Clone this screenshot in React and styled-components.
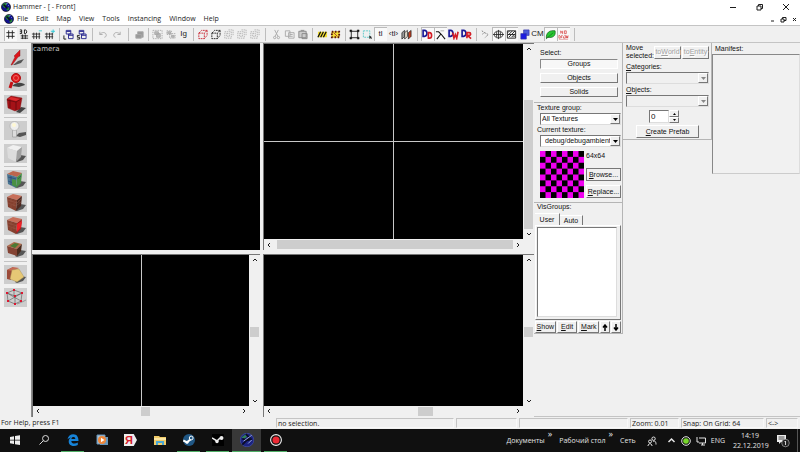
import React from 'react';
import styled, { createGlobalStyle } from 'styled-components';

const face = '#f0f0f0';
const shade = '#8c8c8c';
const line = '#c4c4c4';
const ui = `'Open Sans', 'Noto Sans', sans-serif`;
const dialog = `'Liberation Sans', Arial, sans-serif`;

const GlobalStyle = createGlobalStyle`
  * {box-sizing: border-box;}
  body {margin: 0; background: ${face}; color: #1c1c1c; font: 7px/10px ${ui};}
  button, input, select {font: inherit; color: inherit; margin: 0; padding: 0; border: 0; background: none; border-radius: 0;}
  svg {display: block; flex: none;}
  u {text-underline-offset: 1px; text-decoration-thickness: 1px;}
`;
const Page = styled.div`
  display: flex;
  flex-direction: column;
  min-height: 100vh;
`;

/* title + menu */
const TitleBar = styled.header`
  display: flex;
  align-items: center;
  height: 13px;
  padding: 1px 10px 0 1px;
  gap: 2px;
  background: white;
`;
const Title = styled.h1`
  flex: 1;
  margin: 0;
  font-size: 7px;
  font-weight: normal;
`;
const WindowButtons = styled.div`
  display: flex;
  gap: ${p=>p.$gap}px;
`;
const MenuBar = styled.nav`
  display: flex;
  align-items: center;
  height: 12px;
  padding: 0 2px 0 4px;
  background: white;
  ul {display: flex; flex: 1; list-style: none; margin: 0; padding: 0 0 0 3px; gap: 8px;}
`;
const MenuButton = styled.button`
  line-height: 12px;
`;

/* toolbar */
const Toolbar = styled.div`
  display: flex;
  align-items: center;
  height: 18px;
  padding-left: 4px;
  border-top: 1px solid ${line};
  border-bottom: 1px solid ${line};
`;
const ToolButton = styled.button`
  display: flex;
  align-items: center;
  justify-content: center;
  width: 13px;
  height: 14px;
  font: 8px/10px ${dialog};
  color: ${p=>p.$off ? '#aaa' : '#222'};
  ${p=>p.$on && 'background: #f9f9f9; box-shadow: inset 1px 1px #bbb;'}
`;
const Divider = styled.span`
  display: flex;
  justify-content: center;
  width: ${p=>p.$w}px;
  &::before {content: ''; width: 1px; height: 13px; background: #bdbdbd;}
`;

/* work area */
const Work = styled.main`
  display: flex;
  flex: 1;
`;
const ToolColumn = styled.aside`
  width: 32px;
  padding: 3px 4px 0;
  border-right: 1px solid ${shade};
`;
const ToolSet = styled.div`
  display: flex;
  flex-direction: column;
  gap: 4px;
  padding: 3px 0;
  border-bottom: 1px solid ${line};
  &:last-child {border: 0;}
`;
const BigTool = styled.button`
  width: 23px;
  height: 19px;
  background: #cdcdcd;
`;
const Views = styled.section`
  flex: 1;
  display: grid;
  grid-template-columns: 228fr 271fr;
  grid-template-rows: 208fr 163fr;
  gap: 4px 3px;
`;
const View = styled.div`
  display: grid;
  grid-template-columns: 1fr ${p=>p.$bars ? '11px' : '0'};
  grid-template-rows: 1fr ${p=>p.$bars ? '11px' : '0'};
  border-left: 1px solid #777;
  border-top: 1px solid #777;
  min-width: 0;
`;
const Canvas = styled.div`
  display: flex;
  grid-area: 1 / 1;
  background: black;
  color: #c4c4c4;
  font: 7px/11px 'DejaVu Sans', sans-serif;
  min-height: 0;
  svg {flex: 1; min-width: 0;}
`;
const Bar = styled.div`
  display: flex;
  flex-direction: ${p=>p.$row ? 'row' : 'column'};
  align-items: stretch;
  grid-area: ${p=>p.$row ? '2 / 1' : '1 / 2'};
`;
const BarButton = styled.button`
  display: flex;
  align-items: center;
  justify-content: center;
  flex: 0 0 10px;
  min-width: 0;
`;
const Thumb = styled.div`
  flex: ${p=>p.$size} 0 0;
  background: #cdcdcd;
  margin: ${p=>p.$row ? '1px 0' : '0 1px'};
`;
const Space = styled.div`
  flex: ${p=>p.$size} 0 0;
`;

/* side panels */
const Side = styled.aside`
  display: grid;
  grid-template-columns: 89px 89px 88px;
  align-items: start;
  width: 266px;
  border-bottom: 1px solid ${line};
  font: 7px/8px ${dialog};
  color: #111;
`;
const Panel = styled.div`
  border-right: 1px solid #b5b5b5;
`;
const Section = styled.section`
  display: flex;
  flex-direction: column;
  padding: ${p=>p.$pad};
  border-bottom: 1px solid #b5b5b5;
`;
const Caption = styled.label`
  display: block;
  margin: ${p=>p.$m || '0'};
`;
const Push = styled.button`
  display: flex;
  align-items: center;
  justify-content: center;
  height: ${p=>p.$h || 10}px;
  width: ${p=>p.$w ? `${p.$w}px` : 'auto'};
  border: 1px solid;
  border-color: ${p=>p.$down ? '#888 #fff #fff #888' : '#fff #777 #777 #fff'};
  background: ${p=>p.$down ? '#f7f7f7' : face};
  outline: ${p=>p.$default ? '1px solid #777' : 'none'};
  outline-offset: -1px;
  &:disabled {color: #a0a0a0; text-shadow: 1px 1px white;}
`;
const ButtonStack = styled.div`
  display: grid;
  gap: ${p=>p.$gap}px;
`;
const Combo = styled.span`
  display: flex;
  position: relative;
  height: 12px;
  border: 1px solid;
  border-color: #777 #ddd #ddd #777;
  background: ${p=>p.$off ? face : 'white'};
  select {flex: 1; min-width: 0; appearance: none; padding-left: ${p=>p.$indent || 1}px; padding-right: 9px; opacity: 1;}
`;
const ComboArrow = styled.span`
  position: absolute;
  right: 0;
  top: 0;
  bottom: 0;
  display: flex;
  align-items: center;
  justify-content: center;
  width: 10px;
  pointer-events: none;
  background: ${face};
  border: 1px solid;
  border-color: #fff #777 #777 #fff;
`;
const TextureRow = styled.div`
  display: flex;
  gap: 2px;
  margin-top: 4px;
`;
const TextureButtons = styled.div`
  display: grid;
  flex: 1;
  grid-template-rows: 13px 13px 13px;
  row-gap: 4px;
  span {padding-top: 1px;}
`;
const Tabs = styled.div`
  display: flex;
  align-items: flex-end;
`;
const Tab = styled.button`
  height: ${p=>p.$on ? 12 : 10}px;
  width: ${p=>p.$on ? 25 : 23}px;
  border-top: 1px solid white;
  border-right: 1px solid #777;
`;
const TabPage = styled.div`
  padding: 1px 3px 2px 1px;
  border: 1px solid;
  border-color: #fff #777 #777 #fff;
`;
const List = styled.div`
  height: 90px;
  background: white;
  border: 1px solid;
  border-color: #777 #ddd #ddd #777;
`;
const ButtonRow = styled.div`
  display: flex;
  justify-content: ${p=>p.$center ? 'center' : 'flex-start'};
  gap: 1px;
  padding-top: 1px;
`;
const MoveRow = styled.div`
  display: flex;
  align-items: center;
  gap: 1px;
`;
const MoveLabel = styled.span`
  width: 27px;
`;
const Spinner = styled.div`
  display: flex;
  width: 30px;
  margin: 3px 0 1px 23px;
  input {
    width: 20px;
    height: 13px;
    padding-left: 1px;
    font-size: 8px;
    background: white;
    border: 1px solid;
    border-color: #777 #ddd #ddd #777;
  }
`;
const ManifestTitle = styled.h2`
  margin: 0;
  padding: 2px 0 1px 3px;
  font: inherit;
`;
const ManifestBox = styled.div`
  height: 120px;
  border: 1px solid;
  border-color: #888 #ddd #ccc #888;
  background: #f1f1f1;
`;

/* status */
const Status = styled.footer`
  display: grid;
  grid-template-columns: 276fr 180fr 63fr 111fr 51fr 85fr 34fr;
  height: 12px;
  padding-top: 1px;
`;
const Cell = styled.span`
  height: 10px;
  padding-left: 1px;
  white-space: nowrap;
  overflow: hidden;
  ${p=>p.$inset && 'border: 1px solid; border-color: #c4c4c4 #f8f8f8 #f8f8f8 #c4c4c4; line-height: 9px; margin-right: 2px;'}
`;

/* task bar */
const TaskBar = styled.footer`
  display: flex;
  height: 23px;
  background: #101010;
  color: #e4e4e4;
  font: 7px/10px ${ui};
`;
const Task = styled.button`
  display: flex;
  align-items: center;
  justify-content: center;
  width: 29px;
  background: ${p=>p.$active ? '#383838' : 'none'};
  box-shadow: ${p=>p.$active ? 'inset 0 -1px #4fae66' : 'none'};
`;
const Running = styled.span`
  display: flex;
  align-items: center;
  justify-content: center;
  width: 23px;
  height: 23px;
  border-bottom: 1px solid ${p=>p.$run ? '#4fae66' : 'transparent'};
`;
const YandexTile = styled.span`
  width: 13px;
  height: 12px;
  background: #eee;
  clip-path: polygon(0 0, 75% 0, 100% 50%, 75% 100%, 0 100%);
  color: #d5202b;
  font: bold 11px/12px ${dialog};
  text-align: left;
  padding-left: 1px;
`;
const Links = styled.div`
  display: flex;
  align-items: center;
  gap: 7px;
  margin-left: auto;
  a {color: inherit; text-decoration: none;}
  span {align-self: flex-start; font-size: 9px; margin-left: -4px;}
`;
const Tray = styled.div`
  display: flex;
  align-items: center;
  gap: 5px;
  padding-left: 11px;
`;
const Clock = styled.time`
  width: 34px;
  margin: 0 4px 0 3px;
  text-align: center;
`;
const Desktop = styled.span`
  height: 23px;
  width: 3px;
  margin-left: 2px;
  border-left: 1px solid #555;
`;

function Icon({ w = 12, h = 12, box, children }){
  return(
    <svg width={w} height={h} viewBox={box || `0 0 ${w} ${h}`} fill="none" stroke="currentColor" aria-hidden="true">
      {children}
    </svg>
  );
}
const Globe = ({ size = 10 }) => (
  <Icon w={size} h={size} box="0 0 10 10">
    <circle cx="5" cy="5" r="4.6" fill="#10108c" stroke="#111" strokeWidth=".6"/>
    <path d="M1.2 2.8 3 1.2 5.5 1l.6 1.6-1.7.7.5 1.8L3.4 6 2 4.3ZM6.5 5.2l2 .6-.8 2.1-1.8.9-.4-2Z" fill="#248a38" stroke="none"/>
    <path d="m2.5 2.5 4 4" stroke="#06151a" strokeWidth="1.6"/>
    <path d="m5 2 2-1M7 3l1 1" stroke="#8295ee" strokeWidth=".7"/>
  </Icon>
);
const hash = <path d="M4 1.5v9M8 1.5v9M1.5 4h9M1.5 8h9"/>;
const smallHash = <path d="M3 4v7M6 4v7M9 4v7M1 5.5h9M1 8.5h9" strokeWidth=".9"/>;
const windows = <path d="M3.5 1.5h5v4h-5zM3.5 2.7h5M6 5.5h5v5H6zM6 6.9h5" stroke="#25258e"/>;
const cube = <path d="M2 4.5h6v6H2zM2 4.5l3-3h6l-3 3M11 1.5V7l-3 3.5" strokeDasharray="2 .8"/>;
const bulk = <path d="M2 3h7v7H2zM4 5h3v3H4zM6 1h5v6" strokeDasharray="1.5 .8" strokeWidth=".9"/>;
const word = (a, b) => (
  <g strokeWidth="1.8">
    <path d="M1.2 1.5v6.500h1.600c3.500 0 3.500-6.500 0-6.500Z" stroke="#171795"/>
    <path d={b} stroke={a}/>
  </g>
);
const sheet = (x, fill) => <path d={`M${x} 4 ${x+3} 1.5V8l-3 3Z`} fill={fill}/>;

const tools = [
  { name: 'Grid', on: true, art: hash },
  { name: '3D grid', art: <><path d="M2 1h2v4H2M2 3h2M7 1v4h1c2 0 2-4 0-4Z" stroke="#111"/><path d="M3 7.5h8M3 10h8M5 6v5M8 6v5"/></> },
  { name: 'Smaller grid', art: <>{smallHash}<path d="M8.500 2H12" stroke="#4bc6cf"/></> },
  { name: 'Larger grid', art: <>{smallHash}<path d="M7.500 2.500H12M10 .5v4" stroke="#29c8d5"/></> },
  { sep: 6 },
  { name: 'Load window state', art: <>{windows}<path d="M1 7v4h2.500" stroke="#111"/></> },
  { name: 'Save window state', art: <>{windows}<path d="M4 7H1.500v2H4v2H1" stroke="#111"/></> },
  { sep: 9 },
  { name: 'Undo', off: true, art: <path d="M2 3v3h3M2 6c2-3 7-3 7 1 0 1-1 2-2 2"/> },
  { name: 'Redo', off: true, art: <path d="M10 3v3H7M10 6C8 3 3 3 3 7c0 1 1 2 2 2"/> },
  { sep: 10 },
  { name: 'Carve', off: true, art: <path d="M2 6h6v4H2zM4 6V3h6v6H8" fill="#999"/> },
  { sep: 5 },
  { name: 'Group', off: true, art: <><path d="M1 1.500h10v9H1z" strokeDasharray="1.500 1"/><path d="M3 3h4v3H3zM5 5h4v4H5z" fill="#bbb"/></> },
  { name: 'Ungroup', off: true, art: <><path d="M2 2h5v4H2zM5 5h6v5H5z" strokeDasharray="1.500 1"/><path d="M3 3h3v2H3zM7 7h3v2H7z" fill="#bbb"/></> },
  { name: 'Ignore groups', text: 'Ig' },
  { sep: 6 },
  { name: 'Hide selected', art: <g stroke="#c92a35">{cube}</g> },
  { name: 'Hide unselected', art: cube },
  { name: 'Show hidden', off: true, art: bulk },
  { name: 'Hide object', off: true, art: bulk },
  { name: 'Show object', off: true, art: bulk },
  { sep: 9 },
  { name: 'Cut', off: true, art: <path d="m4 1 3.500 7M8 1 4.500 8M4 8a1.300 1.300 0 1 0 .1 2.600A1.300 1.300 0 0 0 4 8ZM8 8a1.300 1.300 0 1 0 .1 2.600A1.300 1.300 0 0 0 8 8Z"/> },
  { name: 'Copy', off: true, art: <path d="M1.500 2h5v6h-5zM5 4h6v6H5zM6.500 6h3M6.500 8h3"/> },
  { name: 'Paste', off: true, art: <path d="M2 2.500h8v7H2zM4 1.500h4M5.500 5h5.500v5.500H5.500z" fill="#ccc" stroke="#888"/> },
  { sep: 7 },
  { name: 'Cordon', art: <><path d="M1 3h10v6H1z" fill="#f3df32" stroke="none"/><path d="m1 9 3-6M4 9l3-6M7 9l3-6" stroke="#111" strokeWidth="1.400"/></> },
  { name: 'Edit cordon', art: <><path d="M2 3h8v6H2z" fill="#f3df32" stroke="#c9a020"/><path d="M2 3h8v6H2z" stroke="#511" strokeWidth="2" strokeDasharray="1.500 2"/><path d="m4 4 4 4" stroke="#a33"/></> },
  { sep: 6 },
  { name: 'Select by handles', art: <><path d="M2.500 2.500h7v7h-7z"/><path d="M1 1h2v2H1zM9 1h2v2H9zM1 9h2v2H1zM9 9h2v2H9z" fill="#111" stroke="#111" strokeWidth=".5"/></> },
  { name: 'Auto selection', art: <><path d="M1.500 2h7v7h-7z" stroke="#57c8c8" strokeDasharray="2 1"/><path d="M8 7v4l1-1 2 1-1-2h1Z" fill="#222" stroke="none"/></> },
  { name: 'Texture lock', on: true, text: 'tl' },
  { name: 'Scaling texture lock', text: '‹tl›' },
  { name: 'Face alignment', art: <g strokeWidth=".8">{sheet(1, '#999')}{sheet(4, '#e5dfd0')}{sheet(8, '#c63e20')}</g> },
  { sep: 8 },
  { name: 'Displacement mask', on: true, art: word('#d31d25', 'M7 4v6h1.200c3 0 3-6 0-6Z') },
  { name: 'Walkable', on: true, art: <><path d="M1 3h3l3 3 4 5M6 6l-4 5" stroke="#111" strokeWidth="1.200"/><path d="M6 2h4" stroke="#aaa"/></> },
  { name: 'Displacement walkable', art: word('#d31d25', 'm5 4 1.500 6L8 6l1.500 4L11 3') },
  { name: 'Displacement alpha', art: word('#d31d25', 'M6.500 10V4H9c2 0 2 3 0 3H7l4 3.500') },
  { sep: 6 },
  { name: 'Helpers', art: <path d="M2 2 5 4 2 6M5 4l4 2-4 4" stroke="#777" strokeDasharray="1.500 1"/> },
  { name: 'Sphere', on: true, art: <path d="M6 2.200C3 2.200 1.300 4 1.300 6S3 9.800 6 9.800 10.700 8 10.700 6 9 2.200 6 2.200ZM0 6h12M6 1v10M4 3v6M8 3v6" strokeWidth=".9"/> },
  { name: 'Models', on: true, art: <><path d="M1.500 2h9v8h-9z"/><path d="m2 4 2-2M2 7l5-5M3 9l7-7M6 9l4-4M8 9l2-2M2 6h8"/></> },
  { name: 'Instances', art: <><path d="M5 1h6v6H5z" fill="#4a5bd8" stroke="#3434a8" strokeWidth=".7"/><path d="M2 5h6v6H2z" fill="#1c1ce0" stroke="#3434a8" strokeWidth=".7"/></> },
  { name: 'Collision model', text: 'CM' },
  { name: 'Detail props', on: true, art: <><path d="M1.500 10C1 4 5 1 11 2c1 6-3 8-8 7Z" fill="#27c832" stroke="#126017" strokeWidth=".8"/><path d="m1 11 8-7" stroke="#126017" strokeWidth=".7"/></> },
  { name: 'No draw', on: true, art: <g stroke="#d84343" strokeWidth=".8"><path d="M3 5V2l2 3V2M7 2h2v3H7ZM1 7v3h1c2 0 1-3-1-3M4 10V7h1M7 7h1v3H6V8M9 7l.5 3 .5-2 .5 2 .5-3"/><path d="M1 11.500h10" stroke="#e1a1a1"/></g> },
];

const Shadow = () => <path d="m11 17 5-6 6 1-3 4-6 2Z" fill="#555" stroke="none"/>;
const Block = ({ top, left, right }) => (
  <>
    <Shadow/>
    <g stroke="none">
      <path d="m3 4 6-3 9 2-5 4Z" fill={top}/>
      <path d="m3 4 10 3-1 11-8-4Z" fill={left}/>
      <path d="m13 7 5-4-1 10-5 5Z" fill={right}/>
    </g>
  </>
);
const bricks = <path d="m4 7 9 3 4-4M4 10l8 3 5-4M7 6v3M10 10v3M7 12v3M15 7v3" stroke="#a0604f" strokeWidth=".4"/>;
const bigTools = [
  [
    { name: 'Selection', art: <><path d="m9 16 5-4 6-2-3 4-6 2Z" fill="#555" stroke="none"/><path d="m7 16 4-8-1-1 6-6v6l-2 1-6 8Z" fill="#dc151b" stroke="#801015" strokeWidth=".4"/></> },
    { name: 'Magnify', art: <><path d="M8 14c5-5 12-3 13-1l-6 2Z" fill="#444" stroke="none"/><circle cx="12" cy="6" r="4.500" fill="#df171b" stroke="#b01014"/><circle cx="12" cy="6" r="2.500" stroke="#ef6761"/><path d="m8 10-2 6" stroke="#c50f14" strokeWidth="3"/></> },
    { name: 'Camera', art: <><path d="m12 17 5-5 5 1-6 5Z" fill="#444" stroke="none"/><path d="m3 4 4-3 11 2-2 11-5 2-7-3Z" fill="#a51217" stroke="#7c080b" strokeWidth=".4"/><path d="m3 5 9 2 5-3M12 7v8M6 3v10" stroke="#5c080b" strokeWidth=".7"/><path d="m4 4 3-2 9 2-4 2Z" fill="#dc2a2e" stroke="none"/></> },
  ],
  [
    { name: 'Entity', art: <><path d="m12 15 3-3 7-1v3l-6 2Z" fill="#555" stroke="none"/><path d="M8.500 7h4v9h-4Z" fill="#ddd" stroke="#888" strokeWidth=".5"/><circle cx="10.500" cy="5" r="4.500" fill="#eee" stroke="#999" strokeWidth=".5"/><circle cx="10" cy="4" r="2" fill="#fff8d4" stroke="none"/></> },
    { name: 'Block', art: <Block top="#f0f0f0" left="#dcdcdc" right="#a0a0a0"/> },
  ],
  [
    { name: 'Texture application', art: <><Block top="#bd664d" left="#4a7692" right="#499044"/><path d="m4 7 8 2M7 6v9M4 11l8 3M14 9l3-3" stroke="#263d72" strokeWidth=".6"/><path d="m8 9 4 1v7l-4-2Z" fill="#499044" stroke="none"/></> },
    { name: 'Apply texture', art: <><Block top="#c76f5a" left="#85402f" right="#502920"/>{bricks}</> },
    { name: 'Decals', art: <><Block top="#c76f5a" left="#85402f" right="#a02420"/>{bricks}<path d="m13 8 5-3-1 6-4 5Z" fill="#ef2028" stroke="none"/></> },
    { name: 'Overlay', art: <g stroke="none"><Shadow/><path d="m3 7 7-4 8 2-5 5Z" fill="#b06a48"/><path d="m6 7 5-3 4 1-4 4Z" fill="#4c7a34"/><path d="m3 7 10 3v7l-9-3Z" fill="#844333"/><path d="m13 10 5-5-1 7-4 5Z" fill="#4b2b1d"/></g> },
  ],
  [
    { name: 'Clipping', art: <><Shadow/><path d="M3 14V5l6-3-2 13Z" fill="#9b4a38" stroke="none"/><path d="m3 5 6-3 6 1-6 3Z" fill="#c36b56" stroke="none"/><path d="m8 5 7-1 5 8-7 5-7-3Z" fill="#e6c875" stroke="#a08850" strokeWidth=".4"/></> },
    { name: 'Vertex', art: <><path d="m13 16 5-2 4-2" stroke="#999"/><path d="m3 5 7-3 8 3-7 3ZM3 5l1 8 7 3 6-3 1-8M11 8v8M3 5l14 8M18 5 4 13M10 2v6" stroke="#555" strokeWidth=".6"/><path d="M2 4h2v2H2zM9 1h2v2H9zM17 4h2v2h-2zM10 7h2v2h-2zM3 12h2v2H3zM10 15h2v2h-2zM16 12h2v2h-2z" fill="#dc1630" stroke="none"/></> },
  ],
];

const arrows = {
  up: 'm1 4 2-2 2 2', down: 'm1 2 2 2 2-2', left: 'M4 1 2 3l2 2', right: 'm2 1 2 2-2 2',
};
const Chevron = ({ to, size = 6 }) => <Icon w={size} h={size} box="0 0 6 6"><path d={arrows[to]}/></Icon>;
const Drop = ({ off }) => <Icon w={5} h={3}><path d="M0 0h5L2.500 3Z" fill={off ? '#888' : '#000'} stroke="none"/></Icon>;

function ScrollBar({ row, sizes }){
  return(
    <Bar $row={row}>
      <BarButton aria-label={row ? 'Scroll left' : 'Scroll up'}><Chevron to={row ? 'left' : 'up'}/></BarButton>
      <Space $size={sizes[0]}/>
      <Thumb $row={row} $size={sizes[1]}/>
      <Space $size={sizes[2]}/>
      <BarButton aria-label={row ? 'Scroll right' : 'Scroll down'}><Chevron to={row ? 'right' : 'down'}/></BarButton>
    </Bar>
  );
}

function Viewport({ vertical, horizontal, v, h }){
  return(
    <View $bars>
      <Canvas>
        <svg width="100%" height="100%" stroke="#c8c8c8" shapeRendering="crispEdges">
          {vertical && <line x1="50%" x2="50%" y1="0" y2="100%"/>}
          {horizontal && <line x1="0" x2="100%" y1="50%" y2="50%"/>}
        </svg>
      </Canvas>
      <ScrollBar sizes={v}/>
      <ScrollBar row sizes={h}/>
    </View>
  );
}

function Select({ id, value, off, indent }){
  return(
    <Combo $off={off} $indent={indent}>
      <select id={id} disabled={off}>{value && <option>{value}</option>}</select>
      <ComboArrow><Drop off={off}/></ComboArrow>
    </Combo>
  );
}

function Checker(){
  return(
    <svg width="44" height="47" viewBox="0 0 8 8" preserveAspectRatio="none" role="img" aria-label="debugambientcube">
      <rect width="8" height="8" fill="#f000f0"/>
      {[...Array(64).keys()].filter(i=>(i % 8 + Math.floor(i / 8)) % 2).map(i=>(
        <rect key={i} x={i % 8} y={Math.floor(i / 8)} width="1" height="1" fill="black"/>
      ))}
    </svg>
  );
}

function SidePanels(){
  return(
    <Side>
      <Panel>
        <Section $pad="6px 4px 5px 6px">
          <Caption as="span" $m="0 0 2px">Select:</Caption>
          <ButtonStack $gap={4}>
            <Push $down>Groups</Push>
            <Push>Objects</Push>
            <Push>Solids</Push>
          </ButtonStack>
        </Section>
        <Section $pad="1px 1px 4px 6px">
          <Caption htmlFor="group" $m="0 0 1px -3px">Texture group:</Caption>
          <Select id="group" value="All Textures"/>
          <Caption htmlFor="texture" $m="1px 0 1px -3px">Current texture:</Caption>
          <Select id="texture" value="debug/debugambientcube" indent={4}/>
          <TextureRow>
            <Checker/>
            <TextureButtons>
              <span>64x64</span>
              <Push $h={13} $default><u>B</u>rowse...</Push>
              <Push $h={13}><u>R</u>eplace...</Push>
            </TextureButtons>
          </TextureRow>
        </Section>
        <Section $pad="0 1px 0 1px">
          <Caption as="span" $m="0 0 2px 2px">VisGroups:</Caption>
          <Tabs role="tablist">
            <Tab role="tab" aria-selected="true" $on>User</Tab>
            <Tab role="tab" aria-selected="false">Auto</Tab>
          </Tabs>
          <TabPage role="tabpanel"><List/></TabPage>
          <ButtonRow>
            <Push $h={12} $w={21}><u>S</u>how</Push>
            <Push $h={12} $w={21}><u>E</u>dit</Push>
            <Push $h={12} $w={21}><u>M</u>ark</Push>
            <Push $h={12} $w={10} aria-label="Move up"><Icon w={6} h={7}><path d="M3 7V2M1 3.500 3 1l2 2.500" stroke="#000" strokeWidth="1.500"/></Icon></Push>
            <Push $h={12} $w={10} aria-label="Move down"><Icon w={6} h={7}><path d="M3 0v5M1 3.500 3 6l2-2.500" stroke="#000" strokeWidth="1.500"/></Icon></Push>
          </ButtonRow>
        </Section>
      </Panel>
      <Panel>
        <Section $pad="1px 2px 1px 3px">
          <MoveRow>
            <MoveLabel>Move selected:</MoveLabel>
            <Push $h={13} $w={27} disabled>to<u>W</u>orld</Push>
            <Push $h={13} $w={27} disabled>to<u>E</u>ntity</Push>
          </MoveRow>
          <Caption htmlFor="categories" $m="3px 0 1px"><u>C</u>ategories:</Caption>
          <Select id="categories" off/>
          <Caption htmlFor="objects" $m="2px 0 1px"><u>O</u>bjects:</Caption>
          <Select id="objects" off/>
          <Spinner>
            <input aria-label="Count" defaultValue="0"/>
            <ButtonStack $gap={0}>
              <Push $h={7} $w={10} aria-label="More"><Icon w={3} h={2}><path d="M0 2h3L1.500 0Z" fill="#000" stroke="none"/></Icon></Push>
              <Push $h={6} $w={10} aria-label="Less"><Icon w={3} h={2}><path d="M0 0h3L1.500 2Z" fill="#000" stroke="none"/></Icon></Push>
            </ButtonStack>
          </Spinner>
          <ButtonRow $center>
            <Push $h={13} $w={63}><u>C</u>reate Prefab</Push>
          </ButtonRow>
        </Section>
      </Panel>
      <section>
        <ManifestTitle>Manifest:</ManifestTitle>
        <ManifestBox/>
      </section>
    </Side>
  );
}

const tasks = [
  { name: 'Start', art: <path d="m1 3 4-.7v3.500H1ZM6 2.100 11 1.300v4.500H6ZM1 6.500h4V10l-4-.7ZM6 6.500h5V11l-5-.8Z" fill="#eee" stroke="none"/> },
  { name: 'Search', art: <path d="M7.500 1.500a3 3 0 1 0 .1 6 3 3 0 0 0-.1-6ZM5.400 6.600 1.500 10.500" stroke="#ddd"/> },
  { name: 'Edge', run: true, art: <path d="M.5 5.500C1 2 3.500.2 6.300.2 10 .2 11.500 3 11.500 7H4.300c.2 3 4 3.200 6.500 1.600V11C7 13 1.700 12 1.700 7.500 1.700 5.300 3 4 4.500 3.500 2.500 3.600 1.200 4.500.5 5.500ZM4.400 5h3.900C8.200 2.500 4.800 2.400 4.400 5Z" fill="#1683d8" stroke="none"/> },
  { name: 'Media player', art: <><path d="M1 1h8v9H1z" fill="#a9c6dc" stroke="#6590b4"/><path d="M4 3h8v8H4z" fill="#6797bb" stroke="none"/><circle cx="6" cy="6" r="4" fill="#ed873b" stroke="none"/><path d="M5 3.800 8.500 6 5 8.200Z" fill="#fff" stroke="none"/></> },
  { name: 'Yandex', ya: true },
  { name: 'Explorer', art: <><path d="M0 2h5l1 1h6v8H0Z" fill="#efca67" stroke="none"/><path d="M0 4h12v2H0Z" fill="#fbe5a1" stroke="none"/><path d="M2 7h8v4H8V9H4v2H2Z" fill="#4ba7d4" stroke="none"/></> },
  { name: 'Steam', run: true, art: <><circle cx="6" cy="6" r="6" fill="#205784" stroke="none"/><path d="M.3 6.500 4 8.300 8 5" stroke="#fff" strokeWidth="2"/><circle cx="8.200" cy="4" r="1.900" fill="#205784" stroke="#fff"/><circle cx="4" cy="8.300" r="1.500" fill="#fff" stroke="none"/></> },
  { name: 'Source SDK', run: true, art: <><path d="M0 0h12v12H0z" fill="#000" stroke="none"/><path d="m0 4 5 3 3-3" stroke="#eee" strokeWidth="1.500"/><circle cx="5" cy="7.500" r="1.700" fill="#eee" stroke="none"/><circle cx="9.500" cy="4" r="2" fill="#eee" stroke="none"/></> },
  { name: 'Hammer', active: true, art: <><circle cx="6" cy="6" r="5.800" fill="#1c2381" stroke="#4656b9" strokeWidth=".5"/><path d="m1 4 4-3 2 1-3 3Z" fill="#2f7f59" stroke="none"/><path d="m2 10 7-7M2 5l5 1 3-1M5 1l3 3" stroke="#0a0c24" strokeWidth="1.500"/><path d="m3 7 7-5M7 9l3-3" stroke="#a5b6e7" strokeWidth=".8"/></> },
  { name: 'Recorder', run: true, art: <><circle cx="6" cy="6" r="5.400" fill="#111" stroke="#eee" strokeWidth="1.100"/><circle cx="6" cy="6" r="3.500" fill="#ed2a35" stroke="none"/></> },
];

export default function App(){
  return(
    <Page>
      <GlobalStyle/>
      <TitleBar>
        <Globe/>
        <Title>Hammer - [ - Front]</Title>
        <WindowButtons $gap={18}>
          <button aria-label="Minimize"><Icon w={8} h={8}><path d="M1 4.500h6"/></Icon></button>
          <button aria-label="Restore"><Icon w={9} h={8}><path d="M2 3h4v4H2zM3.500 3V1.500h4v4H6"/></Icon></button>
          <button aria-label="Close"><Icon w={8} h={8}><path d="m1 1 6 6M7 1 1 7"/></Icon></button>
        </WindowButtons>
      </TitleBar>
      <MenuBar>
        <Globe/>
        <ul>
          {['File', 'Edit', 'Map', 'View', 'Tools', 'Instancing', 'Window', 'Help'].map(el=>(
            <li key={el}><MenuButton>{el}</MenuButton></li>
          ))}
        </ul>
        <WindowButtons $gap={4}>
          <button aria-label="Minimize view"><Icon w={7} h={7}><path d="M2 5h3"/></Icon></button>
          <button aria-label="Restore view"><Icon w={7} h={7}><path d="M1 3h3v3H1zM2.500 3V1.500h3.500v3H4"/></Icon></button>
          <button aria-label="Close view"><Icon w={7} h={7}><path d="m2 2 3 3M5 2 2 5"/></Icon></button>
        </WindowButtons>
      </MenuBar>
      <Toolbar role="toolbar">
        {tools.map((el,k)=>(
          el.sep
            ? <Divider key={k} $w={el.sep}/>
            : <ToolButton key={k} aria-label={el.name} $on={el.on} $off={el.off}>{el.text || <Icon w={11} h={11} box="0 0 12 12">{el.art}</Icon>}</ToolButton>
        ))}
        <Divider $w={8}/>
      </Toolbar>
      <Work>
        <ToolColumn>
          {bigTools.map((set,k)=>(
            <ToolSet key={k}>
              {set.map(el=>(
                <BigTool key={el.name} aria-label={el.name}><Icon w={23} h={19}>{el.art}</Icon></BigTool>
              ))}
            </ToolSet>
          ))}
        </ToolColumn>
        <Views>
          <View><Canvas>camera</Canvas></View>
          <Viewport vertical horizontal v={[47, 132, 0]} h={[3, 237, 0]}/>
          <Viewport vertical v={[62, 10, 60]} h={[98, 10, 89]}/>
          <Viewport v={[62, 10, 60]} h={[144, 15, 80]}/>
        </Views>
        <SidePanels/>
      </Work>
      <Status>
        <Cell>For Help, press F1</Cell>
        <Cell $inset>no selection.</Cell>
        <Cell $inset/>
        <Cell $inset/>
        <Cell $inset>Zoom: 0.01</Cell>
        <Cell $inset>Snap: On Grid: 64</Cell>
        <Cell $inset>&lt;-&gt;</Cell>
      </Status>
      <TaskBar>
        {tasks.map(el=>(
          <Task key={el.name} aria-label={el.name} $active={el.active}>
            <Running $run={el.run}>{el.ya ? <YandexTile>Я</YandexTile> : <Icon w={el.active ? 14 : 12} h={el.active ? 14 : 12} box="0 0 12 12">{el.art}</Icon>}</Running>
          </Task>
        ))}
        <Links>
          <a href="#documents">Документы</a><span>»</span>
          <a href="#desktop">Рабочий стол</a><span>»</span>
          <a href="#network">Сеть</a>
        </Links>
        <Tray>
          <Icon w={10} h={10}><path d="M6.500 1a1.700 1.700 0 1 0 .1 3.400A1.700 1.700 0 0 0 6.500 1ZM6 5.500c2-1 3 0 3 3M3 4a1.500 1.500 0 1 0 .1 3A1.500 1.500 0 0 0 3 4ZM1 10c0-3 4-3 4 0"/></Icon>
          <span/>
          <Chevron to="up" size={9}/>
          <Icon w={10} h={10}><circle cx="5" cy="5" r="4.300"/><circle cx="5" cy="5" r="2.800" fill="#76d52a" stroke="none"/></Icon>
          <Icon w={10} h={10}><path d="M3 2h6.500v5H3M1 1v5h2M5 9h4M6.500 7v2"/></Icon>
          <span>ENG</span>
          <Clock>14:19<br/>22.12.2019</Clock>
          <Icon w={14} h={14}><path d="M1 1h9v7H5l-2 2V8H1Z" fill="#eee" stroke="none"/><path d="M2.500 3h6M2.500 5h6" stroke="#222" strokeWidth=".8"/><circle cx="9.500" cy="9" r="3.800" fill="#222" stroke="#aaa" strokeWidth=".7"/><path d="m8.500 8 1-1v4" strokeWidth=".9"/></Icon>
          <Desktop/>
        </Tray>
      </TaskBar>
    </Page>
  );
}
